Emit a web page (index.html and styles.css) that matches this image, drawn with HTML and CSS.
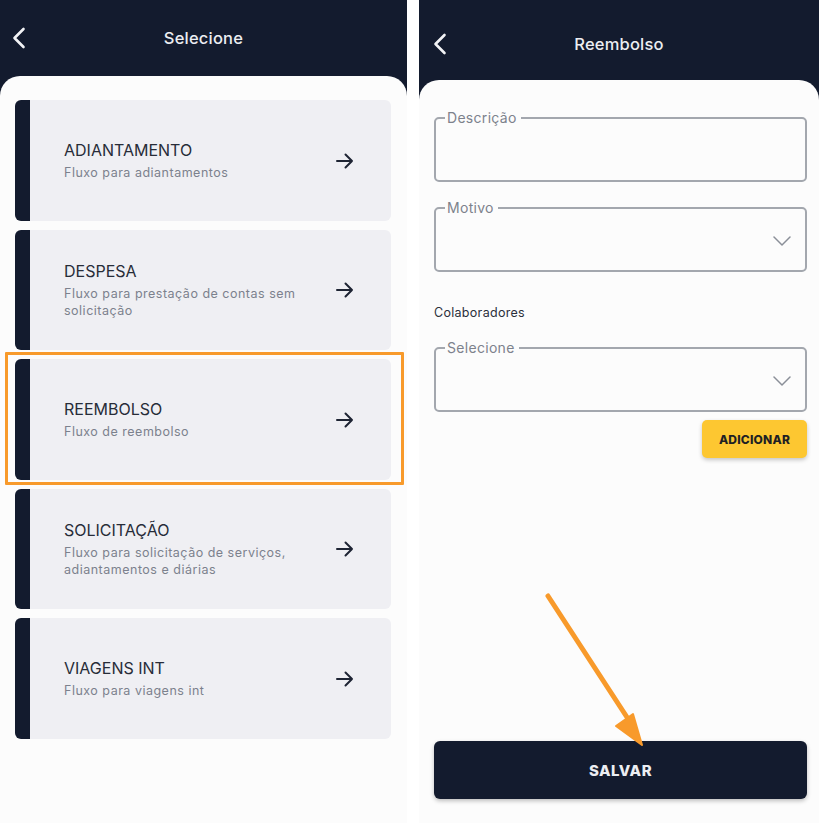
FILE: index.html
```html
<!DOCTYPE html>
<html lang="pt">
<head>
<meta charset="utf-8">
<title>Selecione / Reembolso</title>
<link rel="stylesheet" href="styles.css">
</head>
<body>
<div class="screens">
  <section class="panel panel-left">
    <header class="topbar topbar-left">
      <svg class="back" viewBox="0 0 16 22" width="16" height="22"><path d="M12.5 2 L3.5 11 L12.5 20" fill="none" stroke="#f2f3f5" stroke-width="2.6" stroke-linecap="round" stroke-linejoin="round"/></svg>
      <h1 class="title">Selecione</h1>
    </header>
    <div class="sheet sheet-left">
      <div class="card">
        <div class="card-text">
          <div class="card-title">ADIANTAMENTO</div>
          <div class="card-sub">Fluxo para adiantamentos</div>
        </div>
        <svg class="go" viewBox="0 0 20 18" width="20" height="18"><path d="M2 9 H17 M10.5 2.5 L17 9 L10.5 15.5" fill="none" stroke="#1e2433" stroke-width="2" stroke-linecap="round" stroke-linejoin="round"/></svg>
      </div>
      <div class="card">
        <div class="card-text">
          <div class="card-title">DESPESA</div>
          <div class="card-sub">Fluxo para prestação de contas sem<br>solicitação</div>
        </div>
        <svg class="go" viewBox="0 0 20 18" width="20" height="18"><path d="M2 9 H17 M10.5 2.5 L17 9 L10.5 15.5" fill="none" stroke="#1e2433" stroke-width="2" stroke-linecap="round" stroke-linejoin="round"/></svg>
      </div>
      <div class="card">
        <div class="card-text">
          <div class="card-title">REEMBOLSO</div>
          <div class="card-sub">Fluxo de reembolso</div>
        </div>
        <svg class="go" viewBox="0 0 20 18" width="20" height="18"><path d="M2 9 H17 M10.5 2.5 L17 9 L10.5 15.5" fill="none" stroke="#1e2433" stroke-width="2" stroke-linecap="round" stroke-linejoin="round"/></svg>
      </div>
      <div class="card">
        <div class="card-text">
          <div class="card-title">SOLICITAÇÃO</div>
          <div class="card-sub">Fluxo para solicitação de serviços,<br>adiantamentos e diárias</div>
        </div>
        <svg class="go" viewBox="0 0 20 18" width="20" height="18"><path d="M2 9 H17 M10.5 2.5 L17 9 L10.5 15.5" fill="none" stroke="#1e2433" stroke-width="2" stroke-linecap="round" stroke-linejoin="round"/></svg>
      </div>
      <div class="card">
        <div class="card-text">
          <div class="card-title">VIAGENS INT</div>
          <div class="card-sub">Fluxo para viagens int</div>
        </div>
        <svg class="go" viewBox="0 0 20 18" width="20" height="18"><path d="M2 9 H17 M10.5 2.5 L17 9 L10.5 15.5" fill="none" stroke="#1e2433" stroke-width="2" stroke-linecap="round" stroke-linejoin="round"/></svg>
      </div>
    </div>
    <div class="highlight"></div>
  </section>

  <section class="panel panel-right">
    <header class="topbar topbar-right">
      <svg class="back" viewBox="0 0 16 22" width="16" height="22"><path d="M12.5 2 L3.5 11 L12.5 20" fill="none" stroke="#f2f3f5" stroke-width="2.6" stroke-linecap="round" stroke-linejoin="round"/></svg>
      <h1 class="title">Reembolso</h1>
    </header>
    <div class="sheet sheet-right">
      <fieldset class="field field-first">
        <legend>Descrição</legend>
      </fieldset>
      <fieldset class="field field-select">
        <legend>Motivo</legend>
        <svg class="chev" viewBox="0 0 18 10" width="18" height="10"><path d="M1 1 L9 9 L17 1" fill="none" stroke="#8a8f98" stroke-width="1.5" stroke-linecap="round" stroke-linejoin="round"/></svg>
      </fieldset>
      <div class="section-label">Colaboradores</div>
      <fieldset class="field field-select field-colab">
        <legend>Selecione</legend>
        <svg class="chev" viewBox="0 0 18 10" width="18" height="10"><path d="M1 1 L9 9 L17 1" fill="none" stroke="#8a8f98" stroke-width="1.5" stroke-linecap="round" stroke-linejoin="round"/></svg>
      </fieldset>
      <div class="add-row">
        <button class="btn-add">ADICIONAR</button>
      </div>
      <button class="btn-save">SALVAR</button>
    </div>
    <svg class="pointer" viewBox="0 0 400 823" width="400" height="823">
      <line x1="129" y1="596" x2="215" y2="728" stroke="#f89a2b" stroke-width="5" stroke-linecap="round"/>
      <polygon points="197,726 214,714 223,745" fill="#f89a2b" stroke="#f89a2b" stroke-width="2" stroke-linejoin="round"/>
    </svg>
  </section>
</div>
</body>
</html>
```

FILE: styles.css
```css
* { box-sizing: border-box; }

html, body {
  margin: 0;
  padding: 0;
  background: #ffffff;
}

body {
  font-family: Inter, "Open Sans", "Liberation Sans", sans-serif;
  width: 819px;
  height: 823px;
  overflow: hidden;
}

.screens {
  display: flex;
  gap: 12px;
  height: 823px;
}

.panel {
  position: relative;
  display: flex;
  flex-direction: column;
  background: #131b2e;
  height: 823px;
}

.panel-left { width: 407px; }
.panel-right { width: 400px; }

.topbar {
  position: relative;
  display: flex;
  align-items: center;
  justify-content: center;
}

.topbar-left { height: 76px; }
.topbar-right { height: 80px; }

.back {
  position: absolute;
  top: 50%;
}

.topbar-left .back { left: 11px; margin-top: -11px; }
.topbar-right .back { left: 13px; margin-top: -7px; }

.title {
  margin: 0;
  font-size: 16.5px;
  font-weight: 500;
  color: #eceef2;
  letter-spacing: 0.2px;
}

.topbar-left .title { margin-top: 0; }
.topbar-right .title { margin-top: 8px; }

.sheet {
  flex: 1;
  background: #fcfcfc;
  border-radius: 20px 20px 0 0;
}

.sheet-left {
  padding: 24px 16px 0 15px;
  display: flex;
  flex-direction: column;
  gap: 9px;
}

.card {
  height: 121px;
  display: flex;
  align-items: center;
  background: #efeff3;
  border-radius: 6px;
  border-left: 15px solid #131b2e;
  padding: 0 36px 0 34px;
}

.card:nth-child(2), .card:nth-child(4) { height: 120px; }

.card-text {
  flex: 1;
  display: flex;
  flex-direction: column;
  gap: 4px;
}

.card-title {
  font-size: 16px;
  font-weight: 400;
  color: #272c38;
  line-height: 20px;
}

.card-sub {
  font-size: 12.5px;
  color: #7c818d;
  line-height: 17px;
  letter-spacing: 0.5px;
}

.go { flex: none; }

.highlight {
  position: absolute;
  left: 5px;
  top: 352px;
  width: 399px;
  height: 133px;
  border: 3px solid #f89a2b;
  border-radius: 1px;
  pointer-events: none;
}

.sheet-right {
  padding: 30px 12px 24px 15px;
  display: flex;
  flex-direction: column;
}

.field {
  position: relative;
  margin: 0;
  height: 72px;
  border: 2px solid #a3a7ae;
  border-radius: 5px;
  padding: 0 12px;
}

.field legend {
  font-size: 14px;
  color: #7d828c;
  padding: 0 4px 0 2px;
  margin-left: -3px;
  line-height: 16px;
  letter-spacing: 0.3px;
}

.field-select { margin-top: 18px; }

.chev {
  position: absolute;
  right: 14px;
  top: 20px;
}

.section-label {
  margin-top: 33px;
  font-size: 12.5px;
  color: #2b303b;
  line-height: 16px;
  letter-spacing: 0.3px;
}

.field-colab { margin-top: 19px; }

.add-row {
  display: flex;
  justify-content: flex-end;
  margin-top: 8px;
}

.btn-add {
  width: 105px;
  height: 38px;
  border: none;
  border-radius: 5px;
  background: #fdc731;
  color: #1f1f24;
  font-family: Inter, "Liberation Sans", sans-serif;
  font-weight: 800;
  font-size: 12px;
  letter-spacing: 0.2px;
  box-shadow: 0 2px 4px rgba(0,0,0,0.22);
}

.btn-save {
  margin-top: auto;
  height: 58px;
  border: none;
  border-radius: 6px;
  background: #131b2e;
  color: #eceef2;
  font-family: Inter, "Liberation Sans", sans-serif;
  font-weight: 800;
  font-size: 15px;
  letter-spacing: 0.5px;
  box-shadow: 0 2px 4px rgba(0,0,0,0.25);
}

.pointer {
  position: absolute;
  left: 0;
  top: 0;
  pointer-events: none;
}
```
